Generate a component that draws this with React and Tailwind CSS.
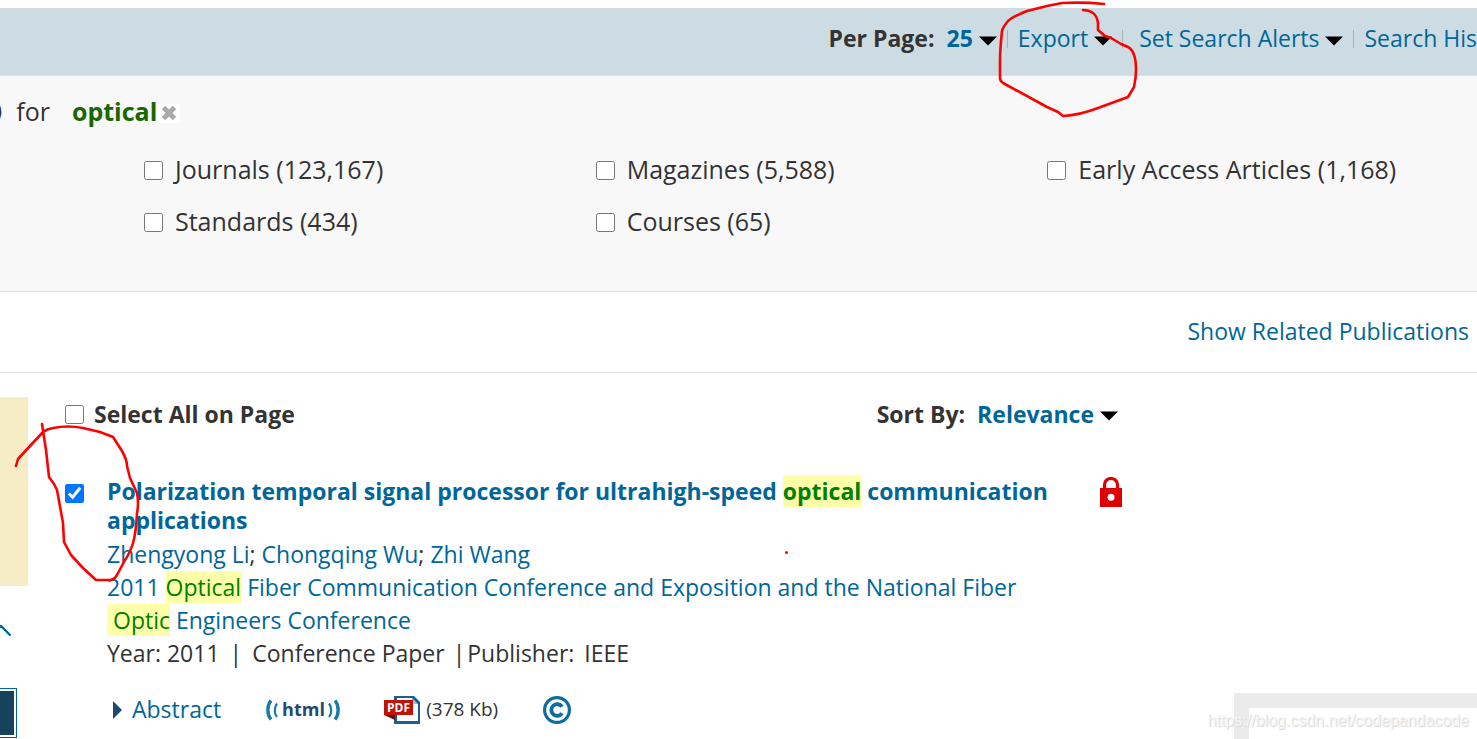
import React, { useState } from 'react';

const contentTypes = [
    { id: 'journals', label: 'Journals', count: '123,167' },
    { id: 'magazines', label: 'Magazines', count: '5,588' },
    { id: 'early', label: 'Early Access Articles', count: '1,168' },
    { id: 'standards', label: 'Standards', count: '434' },
    { id: 'courses', label: 'Courses', count: '65' },
];

const Caret = () => (
    <svg width="18" height="10" viewBox="0 0 18 10" className="shrink-0" aria-hidden="true">
        <path d="M0 0.5H18L9 9.5Z" fill="#000" />
    </svg>
);

const Divider = () => <span className="h-[18px] w-px shrink-0 bg-[#b0b0b0]" />;

const Mark = ({ children, className = '' }) => (
    <mark className={`bg-[#ffffaa] text-[#008000] ${className}`}>{children}</mark>
);

const Dropdown = ({ id, label, value, options }) => {
    const [selected, setSelected] = useState(value);

    return (
        <div className="flex items-center text-[23px] font-bold">
            <label htmlFor={id} className="mr-3 text-[#333]">{label}</label>
            <select
                id={id}
                value={selected}
                onChange={(e) => setSelected(e.target.value)}
                className="field-sizing-content appearance-none bg-transparent font-bold text-[#006699] outline-none cursor-pointer"
            >
                {options.map(option => (
                    <option key={option} value={option}>{option}</option>
                ))}
            </select>
            <span className="ml-1.5 pt-1 pointer-events-none">
                <Caret />
            </span>
        </div>
    );
};

const Toolbar = () => (
    <div className="mt-2 flex h-[68px] items-center justify-end border-b border-[#dcdfe2] bg-[#cddce3] pb-1.5 text-[23px] whitespace-nowrap text-[#006699]">
        <Dropdown id="per-page" label="Per Page:" value="25" options={['10', '25', '50', '75', '100']} />
        <div className="ml-2.5 flex items-center">
            <Divider />
            <button type="button" className="ml-2.5 flex items-center gap-1.5 cursor-pointer">
                Export
                <span className="pt-1"><Caret /></span>
            </button>
        </div>
        <div className="ml-2.5 flex items-center">
            <Divider />
            <button type="button" className="ml-4 flex items-center gap-1.5 cursor-pointer">
                Set Search Alerts
                <span className="pt-1"><Caret /></span>
            </button>
        </div>
        <div className="ml-2.5 flex items-center">
            <Divider />
            <a href="#history" className="ml-2.5">Search His</a>
        </div>
    </div>
);

const Filters = () => (
    <section className="h-[216px] border-b border-[#e2e2e2] bg-[#f8f8f8] pt-[15px] text-[#333]">
        <div className="flex items-center text-[25px] leading-10 whitespace-nowrap">
            <span className="-ml-3 font-semibold">0</span>
            <span className="ml-3.5">for</span>
            <span className="ml-[22px] font-bold text-[#1a6600]">optical</span>
            <button type="button" aria-label="Remove optical" className="mt-1 flex h-[19px] w-[23px] items-center justify-center bg-white cursor-pointer">
                <svg width="16" height="16" viewBox="0 0 16 16" aria-hidden="true">
                    <path d="M2.5 2.5L13.5 13.5M13.5 2.5L2.5 13.5" stroke="#aaa" strokeWidth="5" />
                </svg>
            </button>
        </div>
        <div className="mt-[13px] -mr-[22px] ml-36 grid grid-cols-3 text-[25px] whitespace-nowrap">
            {contentTypes.map(type => (
                <label key={type.id} className="flex h-[52px] items-center gap-3">
                    <input type="checkbox" className="size-[19px] shrink-0" />
                    <span>{type.label} ({type.count})</span>
                </label>
            ))}
        </div>
    </section>
);

const Sidebar = () => (
    <aside className="w-7 shrink-0 pt-6">
        <div className="h-[189px] bg-[#f6edc6]" />
        <svg width="12" height="12" viewBox="0 0 12 12" className="mt-[39px]" aria-hidden="true">
            <path d="M-9 10L1 1L10.5 10.5" fill="none" stroke="#006699" strokeWidth="2.4" />
        </svg>
        <div className="mt-[51px] h-[50px] w-[17px] border border-l-0 border-[#006699] py-0.5 pr-0.5">
            <div className="h-full bg-[#17425c]" />
        </div>
    </aside>
);

const HtmlIcon = () => (
    <svg width="74" height="22" viewBox="0 0 74 22" aria-hidden="true">
        <g fill="none" stroke="#1a7ba6">
            <path d="M5 1.5C0.8 6.5 0.8 15.5 5 20.5" strokeWidth="3.4" />
            <path d="M11 4.5C8 8.5 8 14.5 11 18" strokeWidth="2.2" />
            <path d="M69 1.5C73.2 6.5 73.2 15.5 69 20.5" strokeWidth="3.4" />
            <path d="M63 4.5C66 8.5 66 14.5 63 18" strokeWidth="2.2" />
        </g>
        <text x="37.5" y="16.5" textAnchor="middle" className="fill-[#204a74] font-['Open_Sans',sans-serif] text-[18px] font-bold">html</text>
    </svg>
);

const PdfIcon = () => (
    <svg width="36" height="28" viewBox="0 0 36 28" aria-hidden="true">
        <path d="M10 0H30L36 6V28H10Z" fill="#17608f" />
        <path d="M13 2H28V8H34V25H13Z" fill="#fff" />
        <path d="M28 2L34 8H28Z" fill="#9cc3da" />
        <path d="M0 19H11V24Z" fill="#5e1512" />
        <rect y="4" width="29" height="15" fill="#c11207" />
        <text x="14.5" y="16" textAnchor="middle" className="fill-white font-['Open_Sans',sans-serif] text-[12px] font-bold">PDF</text>
    </svg>
);

const CopyrightIcon = () => (
    <svg width="28" height="28" viewBox="0 0 28 28" fill="none" aria-hidden="true">
        <circle cx="14" cy="14" r="12.4" stroke="#0d6da0" strokeWidth="3.2" />
        <path d="M19 10.8A5.8 5.8 0 1 0 19 17.2" stroke="#0d6da0" strokeWidth="3.8" />
    </svg>
);

const LockIcon = () => (
    <svg width="22" height="30" viewBox="0 0 22 30" aria-label="Locked" role="img">
        <path d="M4.5 12V7.5A6.5 6 0 0 1 17.5 7.5V12" fill="none" stroke="#dc0000" strokeWidth="3.2" />
        <rect y="11" width="22" height="19" fill="#dc0000" />
        <circle cx="11" cy="20.3" r="3.5" fill="#fff" />
    </svg>
);

const Article = () => (
    <article className="mt-[45px] flex items-start">
        <input type="checkbox" defaultChecked aria-label="Select article" className="mt-[7px] size-[19px] shrink-0" />
        <div className="ml-[23px] min-w-0 flex-1 text-[23px] leading-[33px] text-[#333]">
            <h2 className="mb-[3px] font-bold leading-[29px]">
                <a href="#article" className="text-[#006699]">
                    Polarization temporal signal processor for ultrahigh-speed <Mark>optical</Mark> communication applications
                </a>
            </h2>
            <p>
                <a href="#li" className="text-[#006699]">Zhengyong Li</a>;{' '}
                <a href="#wu" className="text-[#006699]">Chongqing Wu</a>;{' '}
                <a href="#wang" className="text-[#006699]">Zhi Wang</a>
            </p>
            <p>
                <a href="#conference" className="text-[#006699]">
                    2011 <Mark>Optical</Mark> Fiber Communication Conference and Exposition and the National Fiber{' '}
                    <Mark className="pl-1.5">Optic</Mark> Engineers Conference
                </a>
            </p>
            <p className="flex">
                <span>Year: 2011</span>
                <span className="mx-2.5">|</span>
                <span>Conference Paper</span>
                <span className="ml-2 mr-0.5">|</span>
                <span>Publisher:</span>
                <span className="ml-2.5">IEEE</span>
            </p>
            <div className="mt-[23px] flex items-center">
                <button type="button" className="ml-1.5 flex items-center gap-2.5 text-[#006699] cursor-pointer">
                    <svg width="9" height="18" viewBox="0 0 9 18" aria-hidden="true">
                        <path d="M0 0L9 9L0 18Z" fill="#1b4b72" />
                    </svg>
                    Abstract
                </button>
                <a href="#html" aria-label="html" className="ml-[45px]"><HtmlIcon /></a>
                <a href="#pdf" aria-label="PDF" className="ml-11"><PdfIcon /></a>
                <span className="ml-1.5 text-[19px]">(378 Kb)</span>
                <a href="#copyright" aria-label="Copyright" className="ml-[45px]"><CopyrightIcon /></a>
            </div>
        </div>
        <div className="ml-[52px] shrink-0"><LockIcon /></div>
    </article>
);

// Freehand red pen marks on top of the page
const PenMarks = () => (
    <svg width="1477" height="739" viewBox="0 0 1477 739" className="absolute top-0 left-0 pointer-events-none" aria-hidden="true">
        <g fill="none" stroke="#f00" strokeWidth="2.6" strokeLinecap="round" strokeLinejoin="round">
            <path d="M1104 4Q1085 2 1062 3L1047 6L1027 11Q1012 17 1008 21Q1003 27 1002 31Q1000 50 1000 60V78Q1000 81 1003 83L1047 107L1058 112L1063 116Q1080 115 1098 108L1128 97L1134 87Q1136 78 1136 70Q1136 60 1134 55Q1132 49 1128 47L1121 44L1111 38L1105 36L1098 30V23Q1097 16 1093 13Q1089 10 1083 10" />
            <path d="M16 466L18 459L43 432Q47 429 53 428Q68 425 83 428L100 432L113 437L122 451Q127 460 127 466L130 478L137 493Q139 503 137 513Q136 533 133 543Q130 553 125 560L117 575Q114 580 110 580H96L83 568L71 555L64 542L63 523L57 490L54 484L49 477L46 450L42 424" />
        </g>
        <circle cx="786.5" cy="552.5" r="1.5" fill="#f00" />
    </svg>
);

const App = () => {
    return (
        <div className="relative flow-root min-h-screen overflow-hidden bg-white font-['Open_Sans','Noto_Sans',sans-serif]">
            <Toolbar />
            <Filters />
            <div className="flex h-[81px] items-center justify-end border-b border-[#e2e2e2] pr-2 pb-0.5 text-[23px]">
                <a href="#publications" className="text-[#006699]">Show Related Publications</a>
            </div>
            <div className="flex">
                <Sidebar />
                <main className="ml-[37px] mr-[355px] min-w-0 flex-1 pt-[23px] text-[23px]">
                    <div className="flex items-center justify-between leading-9">
                        <label className="flex items-center gap-2.5 font-bold text-[#333]">
                            <input type="checkbox" className="size-[19px] shrink-0" />
                            Select All on Page
                        </label>
                        <div className="mr-1">
                            <Dropdown id="sort-by" label="Sort By:" value="Relevance" options={['Relevance', 'Newest First', 'Oldest First']} />
                        </div>
                    </div>
                    <Article />
                </main>
            </div>
            <div className="absolute right-0 bottom-0 h-[46px] w-[243px] border-t-[15px] border-l-[15px] border-[#ebebeb]" />
            <p className="absolute right-2 bottom-2 font-['Liberation_Sans',sans-serif] text-base leading-5 text-[#f4f4f4] [text-shadow:1px_1px_1px_#d4d4d4]">
                https://blog.csdn.net/codepandacode
            </p>
            <PenMarks />
        </div>
    );
};

export default App;
